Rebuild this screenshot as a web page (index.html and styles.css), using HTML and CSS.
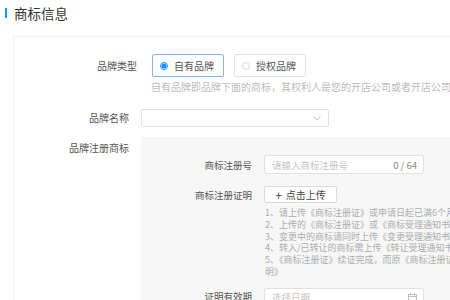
FILE: index.html
```html
<!DOCTYPE html>
<html lang="zh-CN">
<head>
<meta charset="utf-8">
<link rel="stylesheet" href="styles.css">
</head>
<body>
<div class="header"><span class="bar"></span><span class="title">商标信息</span></div>
<div class="card">
  <div class="row row-type">
    <div class="label label-type">品牌类型</div>
    <div class="radios">
      <div class="radio radio-on"><span class="dot"></span>自有品牌</div>
      <div class="radio"><span class="dot"></span>授权品牌</div>
    </div>
  </div>
  <div class="hint">自有品牌即品牌下面的商标，其权利人是您的开店公司或者开店公司的法定代表人</div>
  <div class="row row-name">
    <div class="label">品牌名称</div>
    <div class="select">
      <svg class="chev" width="8" height="5" viewBox="0 0 8 5"><path d="M0.5 0.5 L4 4 L7.5 0.5" fill="none" stroke="#c0c0c0" stroke-width="1"/></svg>
    </div>
  </div>
  <div class="row row-mark">
    <div class="label label-mark">品牌注册商标</div>
    <div class="panel">
      <div class="prow">
        <div class="plabel">商标注册号</div>
        <div class="input"><span class="ph">请输入商标注册号</span><span class="count">0 / 64</span></div>
      </div>
      <div class="prow prow-up">
        <div class="plabel">商标注册证明</div>
        <div class="upload"><span class="plus">+</span>点击上传</div>
      </div>
      <div class="notes">
        <div class="note">1、请上传《商标注册证》或申请日起已满6个月的《商标受理通知书》</div>
        <div class="note">2、上传的《商标注册证》或《商标受理通知书》需加盖公司公章</div>
        <div class="note">3、变更中的商标请同时上传《变更受理通知书》</div>
        <div class="note">4、转入/已转让的商标需上传《转让受理通知书》</div>
        <div class="note">5、《商标注册证》续证完成，而原《商标注册证》已过期的，需上传续展证</div>
        <div class="note">明》</div>
      </div>
      <div class="prow prow-date">
        <div class="plabel">证明有效期</div>
        <div class="input"><span class="ph">选择日期</span>
          <svg class="cal" width="9" height="9" viewBox="0 0 9 9"><rect x="0.5" y="1.5" width="8" height="7" fill="none" stroke="#c0c0c0"/><path d="M0.5 3.5 H8.5 M2.5 0 V2.5 M6.5 0 V2.5" stroke="#c0c0c0"/></svg>
        </div>
      </div>
    </div>
  </div>
</div>
</body>
</html>
```

FILE: styles.css
```css
html, body {
  margin: 0;
  padding: 0;
  background: #fff;
  overflow: hidden;
}
body {
  font-family: "Noto Sans CJK SC", "Noto Sans", sans-serif;
  color: #555;
  width: 450px;
  height: 300px;
}
.header {
  height: 36px;
  display: flex;
  align-items: flex-start;
  padding-left: 5px;
  box-sizing: border-box;
}
.bar {
  width: 2px;
  height: 10px;
  background: #1890ff;
  margin-top: 8px;
}
.title {
  margin-left: 7px;
  font-size: 13.5px;
  line-height: 26px;
  color: #333;
}
.card {
  margin-left: 13px;
  border-top: 1px solid #eeeeee;
  border-left: 1px solid #f2f2f2;
  padding-top: 17px;
  width: 700px;
}
.row {
  display: flex;
  align-items: center;
}
.label {
  width: 115px;
  margin-right: 12px;
  text-align: right;
  font-size: 10px;
  line-height: 12px;
  color: #555;
  flex: none;
}
.label-type {
  width: 123px;
  margin-right: 15px;
}
.radios {
  display: flex;
  gap: 10px;
}
.radio {
  width: 72px;
  height: 23px;
  box-sizing: border-box;
  border: 1px solid #e2e2e2;
  border-radius: 2px;
  display: flex;
  align-items: center;
  padding-left: 7px;
  font-size: 10px;
  color: #555;
}
.radio-on {
  border-color: #7fb5ea;
}
.dot {
  width: 8px;
  height: 8px;
  box-sizing: border-box;
  border: 1px solid #d9d9d9;
  border-radius: 50%;
  margin-right: 6px;
  background: #fff;
}
.radio-on .dot {
  border-color: #1890ff;
  background: radial-gradient(circle, #1890ff 0 2.2px, #fff 2.8px);
}
.hint {
  margin-left: 137px;
  margin-top: 4px;
  font-size: 10px;
  line-height: 12px;
  color: #bcbcbc;
  white-space: nowrap;
}
.row-name {
  margin-top: 16px;
}
.select {
  width: 188px;
  height: 18px;
  box-sizing: border-box;
  border: 1px solid #e2e2e2;
  border-radius: 2px;
  display: flex;
  align-items: center;
  justify-content: flex-end;
  padding-right: 7px;
}
.row-mark {
  margin-top: 10px;
  align-items: flex-start;
}
.label-mark {
  padding-top: 5px;
}
.panel {
  flex: 1;
  background: #f7f7f7;
  padding-top: 18px;
  height: 200px;
}
.prow {
  display: flex;
  align-items: center;
}
.plabel {
  width: 111px;
  margin-right: 12px;
  text-align: right;
  font-size: 9.5px;
  line-height: 12px;
  color: #555;
  flex: none;
}
.input {
  width: 160px;
  height: 19px;
  box-sizing: border-box;
  border: 1px solid #e2e2e2;
  border-radius: 2px;
  background: #fff;
  display: flex;
  align-items: center;
  justify-content: space-between;
  padding: 0 6px 0 7px;
  font-size: 9.5px;
}
.ph {
  color: #c4c4c4;
}
.count {
  color: #888;
}
.prow-up {
  margin-top: 12px;
}
.upload {
  width: 73px;
  height: 17px;
  box-sizing: border-box;
  border: 1px solid #dcdcdc;
  border-radius: 2px;
  background: #fff;
  display: flex;
  align-items: center;
  justify-content: center;
  font-size: 10px;
  color: #444;
}
.plus {
  font-size: 12px;
  margin-right: 4px;
  line-height: 12px;
}
.notes {
  margin-left: 124px;
  margin-top: 4px;
  font-size: 9px;
  line-height: 11.8px;
  color: #adadad;
}
.note {
  white-space: nowrap;
}
.prow-date {
  margin-top: 10px;
  align-items: flex-start;
}
.prow-date .plabel {
  margin-top: 2px;
}
```
